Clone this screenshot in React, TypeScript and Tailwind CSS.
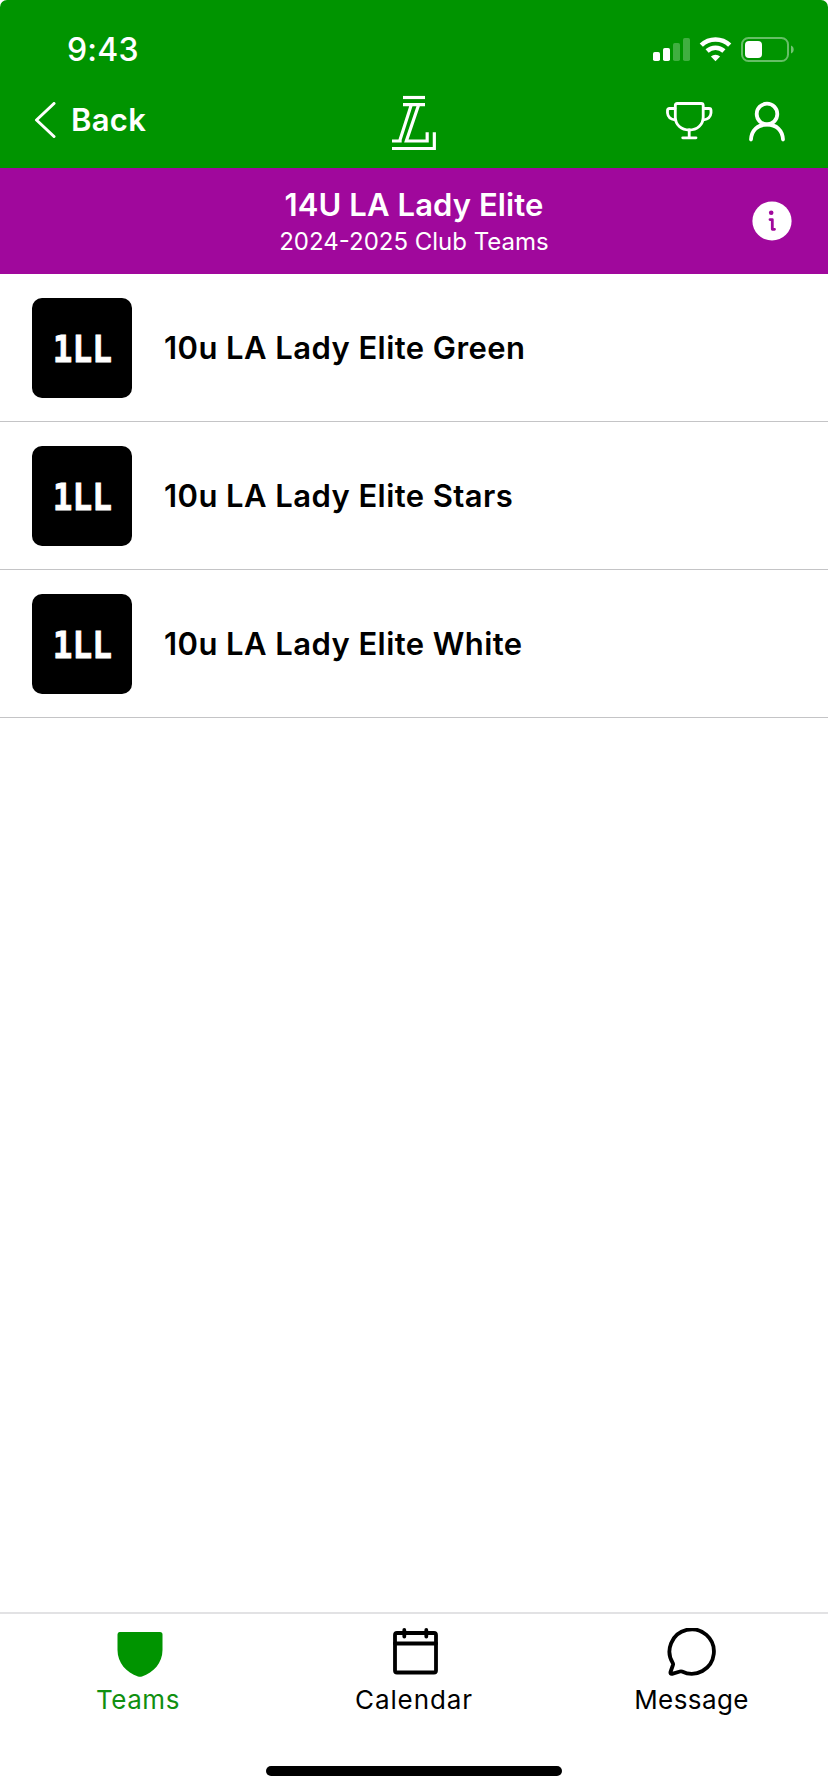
const teams = [
  "10u LA Lady Elite Green",
  "10u LA Lady Elite Stars",
  "10u LA Lady Elite White",
];

function StatusIcons() {
  return (
    <svg className="h-[30px] w-[150px]" viewBox="0 0 150 30" fill="white">
      <rect x="3" y="18" width="7" height="9" rx="1.8" />
      <rect x="13" y="14" width="7" height="13" rx="1.8" />
      <rect x="23" y="9" width="7" height="18" rx="1.8" opacity="0.25" />
      <rect x="33" y="4" width="7" height="23" rx="1.8" opacity="0.25" />
      <g fill="none" stroke="white" strokeWidth="4.6">
        <path d="M51.3 11.2a20.4 20.4 0 0 1 28.4 0" />
        <path d="M57.1 17a12.4 12.4 0 0 1 16.8 0" />
      </g>
      <path d="M65.5 27.2l-4.6-4.6a6.8 6.8 0 0 1 9.2 0z" />
      <rect x="92" y="4" width="46" height="23" rx="6.5" fill="none" stroke="white" strokeWidth="2" opacity="0.4" />
      <rect x="95" y="7" width="17" height="17" rx="4" />
      <path d="M141 11.5c3.6 1.2 3.6 6.8 0 8z" opacity="0.45" />
    </svg>
  );
}

function Logo() {
  return (
    <svg className="h-[56px] w-[44px]" viewBox="0 0 132 168" fill="none" stroke="white" strokeWidth="9.5">
      <path d="M33 7.5H99" />
      <path d="M33 29H58L23 138M0 138H29" />
      <path d="M58 29H99M80 29L43 138H105.5V112" />
      <path d="M0 160.500H127V112" />
    </svg>
  );
}

function TrophyIcon() {
  return (
    <svg className="h-[40px] w-[48px]" viewBox="0 0 48 40" fill="none" stroke="white" strokeWidth="2.8" strokeLinejoin="round" strokeLinecap="round">
      <path d="M12.2 2.5H36.2Q38.2 2.5 38.2 4.5V16C38.2 24 32 29 24.200 29S10.300 24 10.300 16V4.500Q10.300 2.500 12.200 2.500Z" />
      <path d="M10 7.500H4.500Q2.500 7.500 2.500 9.500V12Q3 18 10 18.800M38.500 7.500H44Q46 7.500 46 9.500V12Q45.500 18 38.500 18.800" />
      <path d="M24.200 29V36.500M17.700 36.800H31" />
    </svg>
  );
}

function UserIcon() {
  return (
    <svg className="h-[42px] w-[40px]" viewBox="0 0 40 42" fill="none" stroke="white" strokeWidth="3.8" strokeLinecap="round">
      <circle cx="20" cy="14" r="10.3" />
      <path d="M4 39.500C4.500 30.500 10.500 24.500 20 24.500S35.500 30.500 36 39.500" />
    </svg>
  );
}

function InfoIcon() {
  return (
    <svg className="h-10 w-10" viewBox="0 0 40 40" fill="none">
      <circle cx="20" cy="20" r="19.6" fill="white" />
      <circle cx="19.200" cy="11.800" r="2.300" fill="#a0089c" />
      <path d="M18 18.600H20.300V28.300H22.500" stroke="#a0089c" strokeWidth="2.800" strokeLinecap="round" strokeLinejoin="round" />
    </svg>
  );
}

function ShieldIcon() {
  return (
    <svg className="h-[52px] w-[52px]" viewBox="0 0 52 52">
      <path d="M5.500 4H46Q48.500 4 48.500 6.500V22C48.500 35 39.500 44.500 28 48.500Q26 49.200 24 48.500C12.500 44.500 3.500 35 3.500 22V6.500Q3.500 4 5.500 4Z" fill="#009400" />
    </svg>
  );
}

function CalendarIcon() {
  return (
    <svg className="h-[52px] w-[52px]" viewBox="0 0 52 52" fill="none" stroke="black" strokeWidth="3.800" strokeLinecap="round">
      <rect x="5" y="5" width="41" height="39.500" rx="2" />
      <path d="M5 15.500H46M14.300 1.900V8.500M36.300 1.900V8.500" />
    </svg>
  );
}

function MessageIcon() {
  return (
    <svg className="h-[52px] w-[52px]" viewBox="0 0 52 52" fill="none" stroke="black" strokeWidth="3.800" strokeLinejoin="round">
      <path d="M6 35.500A22.200 22.200 0 1 1 15 43.500Q14 43.200 13 43.500L5 45.800Q3.100 46 3.500 44L5.800 37.500Q6.300 36.500 6 35.500Z" />
    </svg>
  );
}

function TeamRow({ name }: { name: string }) {
  return (
    <li className="flex h-[148px] items-center border-b border-[#c4c4c6] px-8">
      <div className="flex size-[100px] items-center justify-center rounded-[10px] bg-black">
        <span className="scale-x-[0.86] pt-[3px] font-['DejaVu_Sans_Mono',monospace] text-[38px] font-bold leading-none text-white [-webkit-text-stroke:0.8px_white]">
          1LL
        </span>
      </div>
      <span className="ml-8 pt-[2px] text-[31px] font-semibold tracking-[0.43px]">{name}</span>
    </li>
  );
}

export default function App() {
  return (
    <div className="flex h-[1792px] w-[828px] flex-col bg-white font-['Inter',sans-serif] text-black">
      <header className="h-[168px] rounded-t-[7px] bg-[#009400] text-white">
        <div className="flex h-[80px] items-start justify-between pl-[67px] pr-[28px] pt-[34px]">
          <span className="text-[32px] font-medium leading-[32px] tracking-[0.2px]">9:43</span>
          <StatusIcons />
        </div>
        <div className="grid h-[88px] grid-cols-3 items-start px-[34px] pt-[15px]">
          <div className="flex h-[50px] items-center">
            <svg className="h-9 w-[22px]" viewBox="0 0 22 36" fill="none" stroke="white" strokeWidth="3" strokeLinecap="round" strokeLinejoin="round">
              <path d="M20 1.500L2.500 18L20 34.500" />
            </svg>
            <span className="ml-[15px] text-[31px] font-semibold tracking-[0.3px]">Back</span>
          </div>
          <div className="flex justify-center">
            <Logo />
          </div>
          <div className="flex items-center justify-end gap-[34px] pr-[7px] pt-[5px]">
            <TrophyIcon />
            <UserIcon />
          </div>
        </div>
      </header>

      <section className="grid h-[106px] grid-cols-[1fr_auto_1fr] items-center bg-[#a0089c] pl-9 pr-9 text-white">
        <div />
        <div className="flex flex-col items-center pt-[3px]">
          <h1 className="text-[31px] font-semibold leading-[38px] tracking-[0.1px]">14U LA Lady Elite</h1>
          <p className="text-[24px] leading-[35px]">2024-2025 Club Teams</p>
        </div>
        <div className="flex justify-end">
          <InfoIcon />
        </div>
      </section>

      <ul>
        {teams.map((name) => (
          <TeamRow key={name} name={name} />
        ))}
      </ul>

      <footer className="mt-auto h-[180px] border-t-2 border-[#e2e2e4]">
        <nav className="grid grid-cols-3 pt-[14px] text-[26px] leading-[32px]">
          <div className="flex flex-col items-center gap-1 text-[#109010]">
            <div className="pl-[3px]">
              <ShieldIcon />
            </div>
            <span className="tracking-[0.5px]">Teams</span>
          </div>
          <div className="flex flex-col items-center gap-1">
            <div className="pl-[3px]">
              <CalendarIcon />
            </div>
            <span className="tracking-[0.9px]">Calendar</span>
          </div>
          <div className="flex flex-col items-center gap-1">
            <div className="pl-[6px]">
              <MessageIcon />
            </div>
            <span className="pl-[3px] tracking-[0.4px]">Message</span>
          </div>
        </nav>
        <div className="mx-auto mt-[50px] h-[10px] w-[296px] rounded-full bg-black" />
      </footer>
    </div>
  );
}
